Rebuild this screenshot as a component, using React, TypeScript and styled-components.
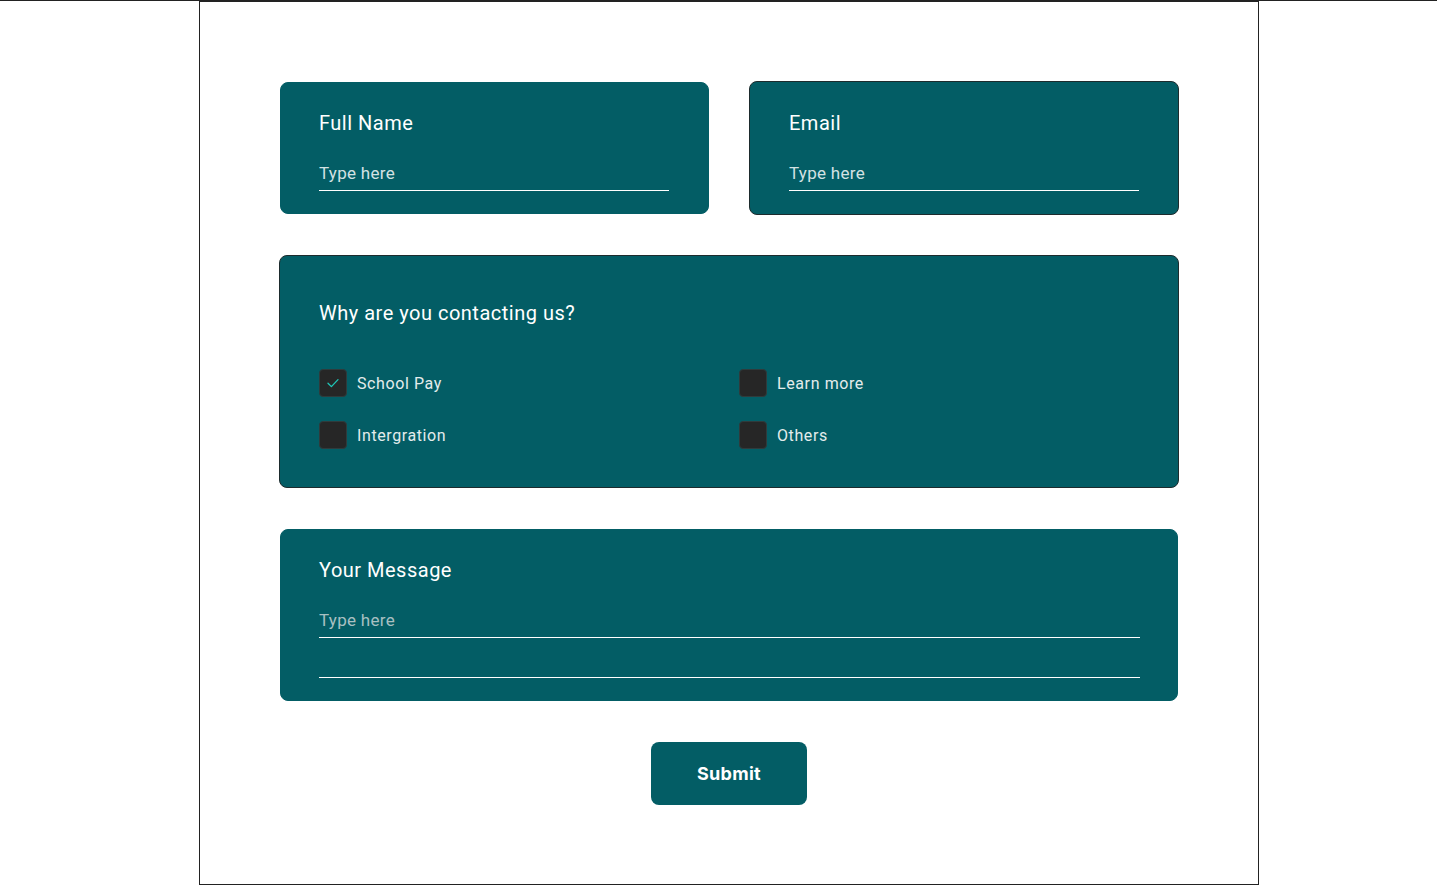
import React, { useState } from "react";
import styled, { createGlobalStyle } from "styled-components";

const GlobalStyle = createGlobalStyle`
  html, body {
    margin: 0;
    padding: 0;
    background: #ffffff;
  }
  * {
    box-sizing: border-box;
  }
`;

const reasons = ["School Pay", "Learn more", "Intergration", "Others"];

export default function App(): JSX.Element {
  const [checked, setChecked] = useState<string[]>(["School Pay"]);

  const toggle = (name: string) =>
    setChecked((prev) =>
      prev.includes(name) ? prev.filter((n) => n !== name) : [...prev, name]
    );

  return (
    <>
      <GlobalStyle />
      <Page>
        <Frame>
          <Form onSubmit={(e) => e.preventDefault()}>
            <TopRow>
              <Card>
                <CardTitle>Full Name</CardTitle>
                <LineInput placeholder="Type here" />
              </Card>
              <EmailCard bordered>
                <CardTitle>Email</CardTitle>
                <LineInput placeholder="Type here" />
              </EmailCard>
            </TopRow>

            <ReasonCard bordered>
              <CardTitle>Why are you contacting us?</CardTitle>
              <CheckGrid>
                {reasons.map((r) => (
                  <CheckRow key={r} onClick={() => toggle(r)}>
                    <CheckBox>
                      {checked.includes(r) && (
                        <svg width="14" height="14" viewBox="0 0 14 14" fill="none">
                          <path
                            d="M2 7.2L5.4 10.6L12 3.6"
                            stroke="#1fc7b8"
                            strokeWidth="1.3"
                            strokeLinecap="round"
                            strokeLinejoin="round"
                          />
                        </svg>
                      )}
                    </CheckBox>
                    <CheckLabel>{r}</CheckLabel>
                  </CheckRow>
                ))}
              </CheckGrid>
            </ReasonCard>

            <MessageCard>
              <CardTitle>Your Message</CardTitle>
              <LineInput placeholder="Type here" dim />
              <ExtraLine />
            </MessageCard>

            <SubmitButton type="submit">Submit</SubmitButton>
          </Form>
        </Frame>
      </Page>
    </>
  );
}

const Page = styled.div`
  border-top: 1px solid #222222;
  width: 100%;
  min-height: 885px;
`;

const Frame = styled.div`
  margin-left: 199px;
  margin-top: -1px;
  width: 1060px;
  height: 885px;
  border: 1px solid #222222;
  border-top-width: 2px;
  background: #ffffff;
`;

const Form = styled.form`
  display: flex;
  flex-direction: column;
  align-items: stretch;
  gap: 41px;
  padding: 80px 80px 0 80px;
`;

const TopRow = styled.div`
  display: grid;
  grid-template-columns: 429px 1fr;
  gap: 40px;
`;

const Card = styled.div<{ bordered?: boolean }>`
  display: flex;
  flex-direction: column;
  background: #035d65;
  border-radius: 8px;
  border: 1px solid ${(p) => (p.bordered ? "#1d2b2d" : "#035d65")};
  padding: 27px 39px 22px 38px;
  font-family: "Roboto", "Liberation Sans", sans-serif;
`;

const EmailCard = styled(Card)`
  margin: -1px -1px -1px 0;
  padding: 28px 39px 23px 39px;
`;

const ReasonCard = styled(Card)`
  margin: 0 -1px;
  padding: 44px 39px 38px;
`;

const MessageCard = styled(Card)`
  padding-right: 37px;
`;

const CardTitle = styled.div`
  color: #ffffff;
  font-size: 20px;
  line-height: 26px;
  font-weight: 400;
  margin-bottom: 26px;
  letter-spacing: 0.5px;
`;

const LineInput = styled.input<{ dim?: boolean }>`
  width: 100%;
  height: 29px;
  padding: 0 0 6px 0;
  background: transparent;
  border: none;
  border-bottom: 1px solid #ffffff;
  color: #ffffff;
  font-family: "Roboto", "Liberation Sans", sans-serif;
  font-size: 17px;
  letter-spacing: 0.3px;
  outline: none;
  &::placeholder {
    color: ${(p) => (p.dim ? "#a9c0c2" : "#d3e2e3")};
  }
`;

const ExtraLine = styled.div`
  height: 40px;
  border-bottom: 1px solid #ffffff;
`;

const CheckGrid = styled.div`
  display: grid;
  grid-template-columns: 420px 1fr;
  row-gap: 24px;
  margin-top: 17px;
`;

const CheckRow = styled.label`
  display: flex;
  align-items: center;
  gap: 10px;
  cursor: pointer;
`;

const CheckBox = styled.span`
  width: 28px;
  height: 28px;
  border-radius: 4px;
  background: #262626;
  border: 1px solid #2f3b3c;
  display: flex;
  align-items: center;
  justify-content: center;
`;

const CheckLabel = styled.span`
  color: #e4ecec;
  font-size: 16px;
  letter-spacing: 0.6px;
`;

const SubmitButton = styled.button`
  align-self: center;
  width: 156px;
  height: 63px;
  border: none;
  border-radius: 8px;
  background: #035d65;
  color: #ffffff;
  font-family: "Inter", "Liberation Sans", sans-serif;
  font-weight: 700;
  font-size: 18px;
  letter-spacing: 0.3px;
  cursor: pointer;
`;
